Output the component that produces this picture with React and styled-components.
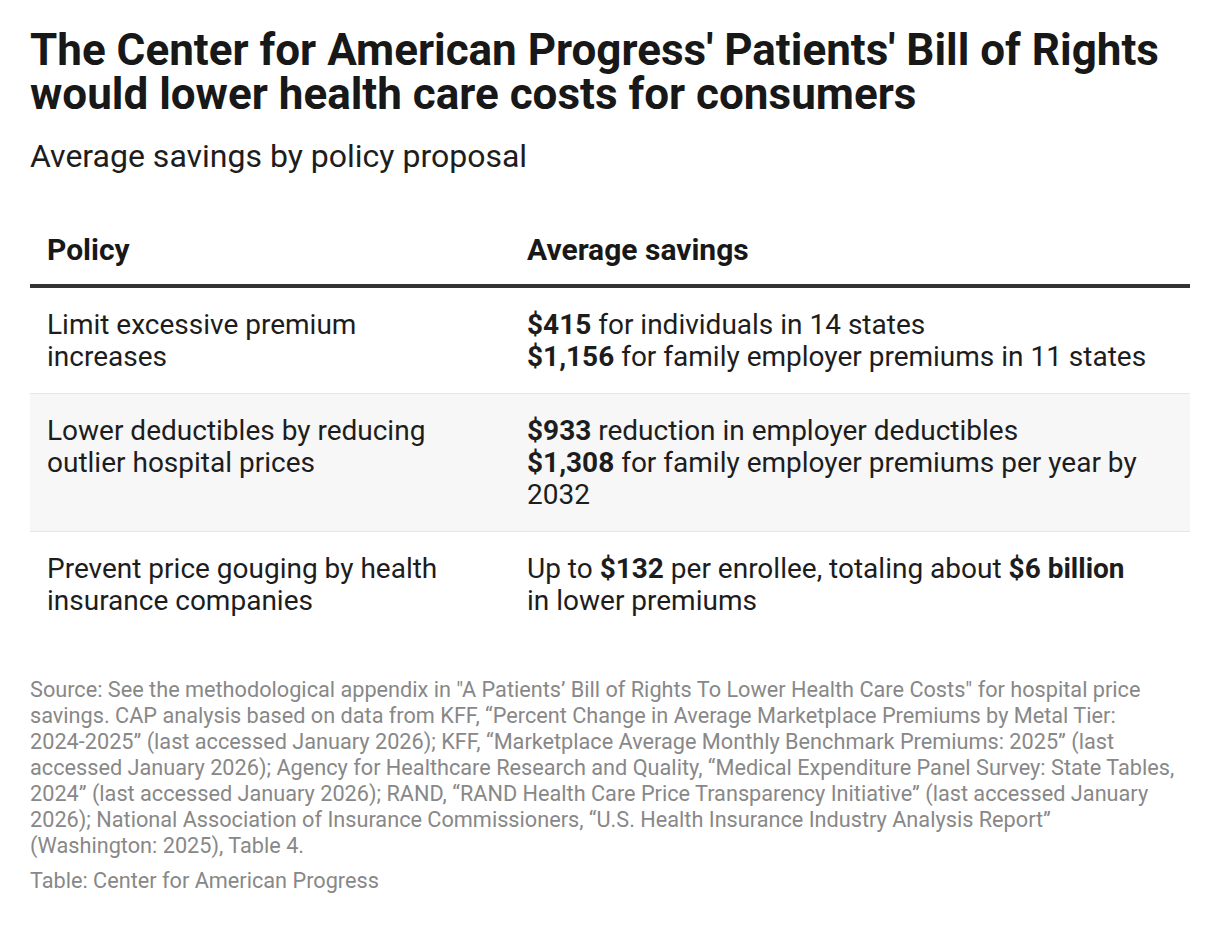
import React from "react";
import styled, { createGlobalStyle } from "styled-components";

const Global = createGlobalStyle`
  html, body { margin: 0; padding: 0; background: #ffffff; }
  body { font-family: Roboto, "Liberation Sans", sans-serif; color: #1d1d1d; }
`;

const Page = styled.div`
  padding: 28px 30px 30px 30px;
  width: 1160px;
`;

const Title = styled.h1`
  margin: 0;
  font-size: 44px;
  line-height: 44px;
  font-weight: 700;
  color: #181818;
`;

const Subtitle = styled.p`
  margin: 21px 0 0 0;
  font-size: 32px;
  line-height: 38px;
  font-weight: 400;
  color: #1d1d1d;
`;

const Table = styled.div`
  margin-top: 57px;
  display: grid;
  grid-template-columns: 480px 1fr;
`;

const HeadCell = styled.div`
  padding: 0 17px 16px 17px;
  font-size: 30px;
  line-height: 36px;
  font-weight: 700;
  color: #181818;
  border-bottom: 4px solid #333333;
`;

const Cell = styled.div`
  padding: 21px ${(p) => (p.$first ? "50px" : "41px")} 20px 17px;
  font-size: 28px;
  line-height: 32px;
  font-weight: 400;
  color: #1d1d1d;
  background: ${(p) => (p.$shade ? "#f7f7f7" : "transparent")};
  border-bottom: ${(p) => (p.$last ? "none" : "1px solid #e6e6e6")};
`;

const B = styled.b`
  font-weight: 700;
`;

const Notes = styled.div`
  margin-top: 40px;
  max-width: 1148px;
  font-size: 21.7px;
  line-height: 26px;
  color: #888888;
`;

const NoWrap = styled.span`
  white-space: nowrap;
`;

const Credit = styled.div`
  margin-top: 9px;
  font-size: 21.7px;
  line-height: 26px;
  color: #888888;
`;

const rows = [
  {
    policy: "Limit excessive premium increases",
    savings: (
      <>
        <B>$415</B> for individuals in 14 states
        <br />
        <B>$1,156</B> for family employer premiums in 11 states
      </>
    ),
  },
  {
    policy: "Lower deductibles by reducing outlier hospital prices",
    savings: (
      <>
        <B>$933</B> reduction in employer deductibles
        <br />
        <B>$1,308</B> for family employer premiums per year by 2032
      </>
    ),
  },
  {
    policy: "Prevent price gouging by health insurance companies",
    savings: (
      <>
        Up to <B>$132</B> per enrollee, totaling about <B>$6 billion</B> in
        lower premiums
      </>
    ),
  },
];

export default function App() {
  return (
    <Page>
      <Global />
      <Title>
        The Center for American Progress' Patients' Bill of Rights would lower
        health care costs for consumers
      </Title>
      <Subtitle>Average savings by policy proposal</Subtitle>
      <Table>
        <HeadCell>Policy</HeadCell>
        <HeadCell>Average savings</HeadCell>
        {rows.map((r, i) => (
          <React.Fragment key={i}>
            <Cell $first $shade={i === 1} $last={i === rows.length - 1}>
              {r.policy}
            </Cell>
            <Cell $shade={i === 1} $last={i === rows.length - 1}>
              {r.savings}
            </Cell>
          </React.Fragment>
        ))}
      </Table>
      <Notes>
        Source: See the methodological appendix in "A Patients’ Bill of Rights
        To Lower Health Care Costs" for hospital price savings. CAP analysis
        based on data from KFF, “Percent Change in Average Marketplace Premiums
        by Metal Tier: <NoWrap>2024-2025”</NoWrap> (last accessed January
        2026); KFF, “Marketplace Average Monthly Benchmark Premiums: 2025”
        (last accessed January 2026); Agency for Healthcare Research and
        Quality, “Medical Expenditure Panel Survey: State Tables, 2024” (last
        accessed January 2026); RAND, “RAND Health Care Price Transparency
        Initiative” (last accessed January 2026); National Association of
        Insurance Commissioners, “U.S. Health Insurance Industry Analysis
        Report” (Washington: 2025), Table 4.
      </Notes>
      <Credit>Table: Center for American Progress</Credit>
    </Page>
  );
}
